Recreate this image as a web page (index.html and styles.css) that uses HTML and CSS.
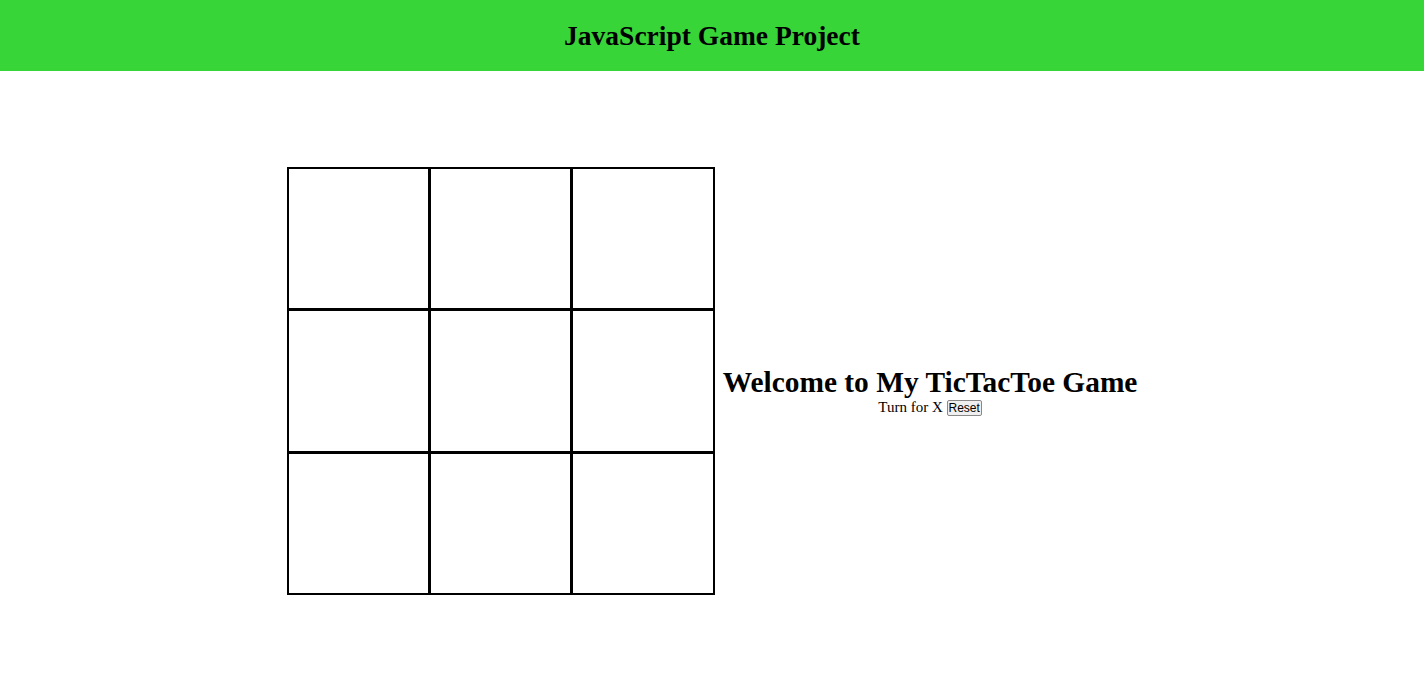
FILE: index.html
```html
<!DOCTYPE html>
<html>
<head>
<meta charset="utf-8">
<title>TicTacToe</title>
<link rel="stylesheet" href="styles.css">
</head>
<body>
<header class="topbar">
  <h2 class="title">JavaScript Game Project</h2>
</header>
<main class="game">
  <div class="board">
    <div class="cell"></div><div class="cell"></div><div class="cell"></div>
    <div class="cell"></div><div class="cell"></div><div class="cell"></div>
    <div class="cell"></div><div class="cell"></div><div class="cell"></div>
  </div>
  <div class="info">
    <h1 class="welcome">Welcome to My TicTacToe Game</h1>
    <div class="status"><span class="turn">Turn for X</span> <button class="reset">Reset</button></div>
  </div>
</main>
</body>
</html>
```
FILE: styles.css
```css
html, body {
  margin: 0;
  padding: 0;
  background: #fff;
  font-family: "Liberation Serif", "Times New Roman", serif;
  color: #000;
}
.topbar {
  background: #38d538;
  height: 71px;
  display: flex;
  align-items: center;
  justify-content: center;
}
.title {
  margin: 0;
  font-size: 27.5px;
  font-weight: bold;
}
.game {
  display: flex;
  justify-content: center;
  align-items: center;
  gap: 8px;
  padding-top: 96px;
}
.board {
  display: grid;
  grid-template-columns: repeat(3, 139.4px);
  grid-template-rows: repeat(3, 139.4px);
  gap: 3px;
  background: #000;
  border: 2px solid #000;
}
.cell {
  background: #fff;
}
.info {
  text-align: center;
  padding-top: 20px;
}
.welcome {
  margin: 0;
  font-size: 29.4px;
  line-height: 1.05;
}
.status {
  font-size: 15px;
  line-height: 18px;
}
.reset {
  font-family: "Liberation Sans", Arial, sans-serif;
  font-size: 12px;
  padding: 0 1px;
  border: 1px solid #888;
  border-radius: 2px;
  background: #efefef;
}
```
